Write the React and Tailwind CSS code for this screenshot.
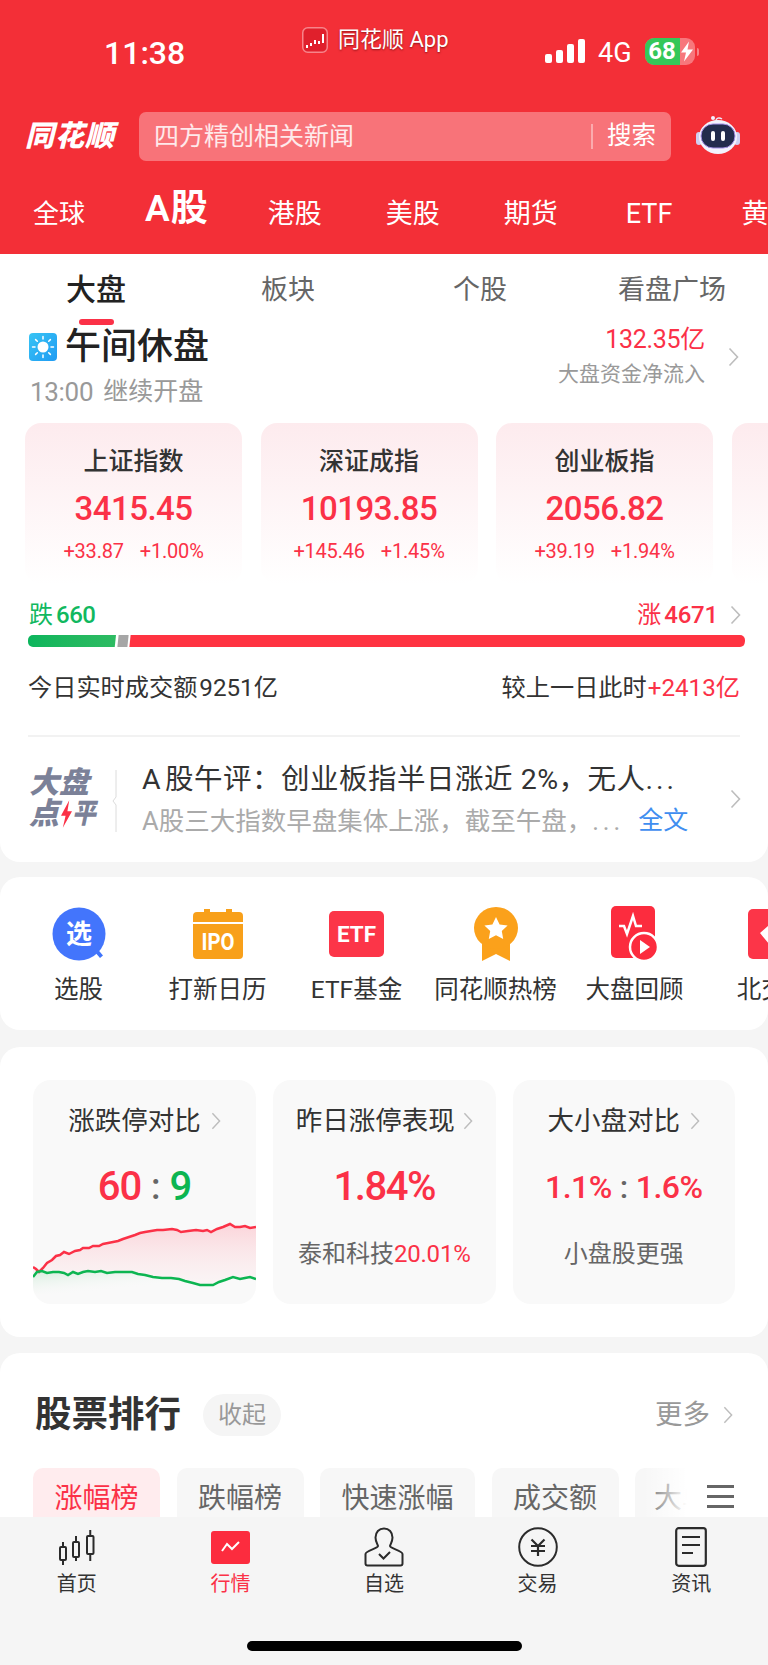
import React from 'react';

const RED = 'text-[#fb3147]';

const marketTabs = [
  { label: '全球', cls: 'ml-[33px] text-[26px]' },
  { label: 'A股', cls: 'ml-[60px] text-[37px] font-semibold tracking-[1px] -mt-[5px]' },
  { label: '港股', cls: 'ml-[59px] text-[27px]' },
  { label: '美股', cls: 'ml-[64px] text-[27px]' },
  { label: '期货', cls: 'ml-[64px] text-[27px]' },
  { label: 'ETF', cls: 'ml-[68px] text-[27px]' },
  { label: '黄金', cls: 'ml-[69px] text-[27px]' },
];

const indexCards = [
  { name: '上证指数', value: '3415.45', change: '+33.87', pct: '+1.00%' },
  { name: '深证成指', value: '10193.85', change: '+145.46', pct: '+1.45%' },
  { name: '创业板指', value: '2056.82', change: '+39.19', pct: '+1.94%' },
];

const upLine = [
  [0, 45], [3, 47], [6, 50], [10, 46], [14, 41], [19, 38], [23, 34], [27, 33], [31, 30], [36, 32], [42, 29], [47, 28],
  [50, 26], [56, 26], [60, 24], [66, 24], [70, 22], [75, 21], [80, 20], [85, 19], [90, 17], [96, 15], [102, 13], [107, 11],
  [112, 10], [118, 9], [124, 8], [130, 8], [139, 7], [144, 8], [148, 10], [155, 9], [163, 8], [170, 9], [174, 8], [178, 10],
  [184, 7], [190, 5], [197, 2], [202, 5], [207, 5], [212, 4], [217, 6], [223, 5],
];

const downLine = [
  [0, 55], [4, 50], [9, 49], [14, 51], [20, 50], [26, 50], [31, 51], [35, 53], [40, 50], [45, 52], [50, 50], [55, 49],
  [62, 50], [68, 49], [74, 51], [82, 50], [90, 50], [99, 50], [105, 52], [112, 53], [120, 55], [129, 56], [138, 56], [146, 57],
  [152, 59], [160, 61], [167, 63], [173, 63], [180, 63], [186, 60], [192, 58], [200, 55], [207, 57], [212, 56], [217, 55], [223, 57],
];

const toPath = (pts) => pts.map(([x, y], i) => `${i ? 'L' : 'M'}${x} ${y}`).join(' ');

function Chevron({ className = '' }) {
  return (
    <svg viewBox="0 0 11 20" className={className} fill="none" stroke="#bdbdbd" strokeWidth="1.6">
      <path d="M1.5 1.5 9.5 10 1.5 18.5" />
    </svg>
  );
}

function AppBadge() {
  return (
    <svg viewBox="0 0 26 26" className="w-[26px] h-[26px] shrink-0">
      <rect x="0.75" y="0.75" width="24.5" height="24.5" rx="5" fill="#e0202c" stroke="#f7848a" strokeWidth="1.5" />
      <path d="M4 18h2v3H4zM8 16h2v3H8zM12 13h2v4h-2zM16 14h2v3h-2zM20 7h2v9h-2z" fill="#fff" />
    </svg>
  );
}

function Robot() {
  return (
    <svg viewBox="0 0 44 40" className="w-[44px] h-[40px]">
      <path d="M20 6c0-3 3-4 6-2" fill="none" stroke="#ece8fb" strokeWidth="1.5" />
      <circle cx="17" cy="3" r="2" fill="#f4f1ff" />
      <rect x="0" y="17" width="6" height="13" rx="3" fill="#cfd0f2" />
      <rect x="38" y="17" width="6" height="13" rx="3" fill="#cfd0f2" />
      <ellipse cx="22" cy="22" rx="19" ry="17" fill="#f3f3fd" />
      <rect x="5" y="9" width="34" height="24" rx="12" fill="#232c4d" stroke="#a48fe6" strokeWidth="1" />
      <rect x="15" y="16" width="4" height="10" rx="2" fill="#fff" />
      <rect x="25" y="16" width="4" height="10" rx="2" fill="#fff" />
    </svg>
  );
}

function SunBadge() {
  return (
    <svg viewBox="0 0 28 28" className="w-[28px] h-[28px] shrink-0">
      <defs>
        <linearGradient id="sunBg" x1="0" y1="0" x2="1" y2="1">
          <stop offset="0" stopColor="#38c4f4" />
          <stop offset="1" stopColor="#1f9bf3" />
        </linearGradient>
      </defs>
      <rect width="28" height="28" rx="4" fill="url(#sunBg)" />
      <circle cx="14" cy="14" r="5.5" fill="#fff" />
      <g stroke="#fff" strokeWidth="1.5" strokeLinecap="round">
        <path d="M14 3.5v2.5M14 22v2.5M3.5 14H6M22 14h2.5M6.6 6.6l1.7 1.7M19.7 19.7l1.7 1.7M6.6 21.4l1.7-1.7M19.7 8.3l1.7-1.7" />
      </g>
    </svg>
  );
}

function PickIcon() {
  return (
    <svg viewBox="0 0 54 54" className="w-[54px] h-[54px]">
      <path d="M42 44l6 7 3-2.5-6-7z" fill="#3f74fb" />
      <circle cx="27" cy="27" r="26.500" fill="#4375fc" />
      <text x="27" y="36" textAnchor="middle" fontSize="26" fontWeight="700" fill="#fff" fontFamily="Noto Sans CJK SC">选</text>
    </svg>
  );
}

function IpoIcon() {
  return (
    <svg viewBox="0 0 50 50" className="w-[50px] h-[50px]">
      <path d="M11 0h6v3h16V0h6v3h7a4 4 0 0 1 4 4v6H0V7a4 4 0 0 1 4-4h7z" fill="#f8a01a" />
      <path d="M0 15h50v31a4 4 0 0 1-4 4H4a4 4 0 0 1-4-4z" fill="#f8a01a" />
      <text x="25" y="41" textAnchor="middle" fontSize="23" fontWeight="700" fill="#fff" fontFamily="Roboto" textLength="33" lengthAdjust="spacingAndGlyphs">IPO</text>
    </svg>
  );
}

function EtfIcon() {
  return (
    <svg viewBox="0 0 55 46" className="w-[55px] h-[46px]">
      <rect width="55" height="46" rx="5" fill="#fc3548" />
      <text x="27.500" y="31" textAnchor="middle" fontSize="22" fontWeight="700" fill="#fff" fontFamily="Roboto" textLength="39" lengthAdjust="spacingAndGlyphs">ETF</text>
    </svg>
  );
}

function MedalIcon() {
  return (
    <svg viewBox="0 0 44 54" className="w-[44px] h-[54px]">
      <path d="M8 32v22l14-7 14 7V32z" fill="#fba11b" />
      <ellipse cx="22" cy="21" rx="22" ry="21" fill="#fba11b" />
      <path d="M22 10l3.600 7.400 8 1.100-5.800 5.600 1.400 8L22 28.300l-7.200 3.800 1.400-8-5.800-5.600 8-1.100z" fill="#fff" />
    </svg>
  );
}

function ReviewIcon() {
  return (
    <svg viewBox="0 0 48 56" className="w-[48px] h-[56px]">
      <rect width="44" height="52" rx="5" fill="#fc2c3e" />
      <path d="M8 20h5l3 8 6-18 3 10h6" fill="none" stroke="#fff" strokeWidth="2.500" />
      <circle cx="33" cy="41" r="14" fill="#fc2c3e" stroke="#fff" strokeWidth="2.500" />
      <path d="M29 34l10 7-10 7z" fill="#fff" />
    </svg>
  );
}

function BeijingIcon() {
  return (
    <svg viewBox="0 0 52 50" className="w-[52px] h-[50px]">
      <rect width="52" height="50" rx="5" fill="#fc3548" />
      <path d="M12 24l9-8h20v6H24l-2 4 3 3h16v6H21z" fill="#fff" />
    </svg>
  );
}

const shortcuts = [
  { label: '选股', icon: <PickIcon /> },
  { label: '打新日历', icon: <IpoIcon /> },
  { label: 'ETF基金', icon: <EtfIcon /> },
  { label: '同花顺热榜', icon: <MedalIcon /> },
  { label: '大盘回顾', icon: <ReviewIcon /> },
  { label: '北交所', icon: <BeijingIcon /> },
];

function TrendChart() {
  const upArea = `${toPath(upLine)} ${[...downLine].reverse().map(([x, y]) => `L${x} ${y}`).join(' ')} Z`;
  const downArea = `${toPath(downLine)} L223 72 L0 72 Z`;
  return (
    <svg viewBox="0 0 223 82" className="w-full h-[82px] block">
      <defs>
        <linearGradient id="upFill" x1="0" y1="0" x2="0" y2="1">
          <stop offset="0" stopColor="#fbd5da" />
          <stop offset="1" stopColor="#fbeef0" stopOpacity="0.4" />
        </linearGradient>
        <linearGradient id="downFill" x1="0" y1="0" x2="1" y2="1">
          <stop offset="0" stopColor="#d4eddc" />
          <stop offset="0.6" stopColor="#f9f9f9" stopOpacity="0" />
        </linearGradient>
      </defs>
      <path d={upArea} fill="url(#upFill)" />
      <path d={downArea} fill="url(#downFill)" />
      <path d={toPath(upLine)} fill="none" stroke="#fb3147" strokeWidth="2.500" />
      <path d={toPath(downLine)} fill="none" stroke="#0cb551" strokeWidth="2.500" />
    </svg>
  );
}

function NavItem({ label, active, children }) {
  return (
    <div className="flex flex-col items-center pt-[10px]">
      <div className="h-[40px] flex items-center justify-center">{children}</div>
      <span className={`mt-[3px] text-[20px] leading-[28px] ${active ? RED : 'text-[#333]'}`}>{label}</span>
    </div>
  );
}

export default function App() {
  return (
    <div className="w-[768px] h-[1665px] flex flex-col overflow-hidden bg-[#f5f5f5] font-['Roboto','Noto_Sans_CJK_SC',sans-serif]">
      <header className="h-[254px] shrink-0 bg-[#f32f37] text-white">
        {/* status bar */}
        <div className="h-[112px] flex items-start">
          <span className="ml-[104px] mt-[33px] w-[198px] text-[32px] leading-[40px] font-medium">11:38</span>
          <div className="mt-[27px] w-[243px] flex items-center gap-[10px]">
            <AppBadge />
            <span className="text-[22px] leading-[26px] [text-shadow:0_1px_2px_rgba(80,0,0,0.6)]">同花顺 App</span>
          </div>
          <div className="mt-[39px] flex items-end gap-[4px] h-[24px]">
            <i className="w-[7px] h-[9px] rounded-[2px] bg-white" />
            <i className="w-[7px] h-[13px] rounded-[2px] bg-white" />
            <i className="w-[7px] h-[19px] rounded-[2px] bg-white" />
            <i className="w-[7px] h-[24px] rounded-[2px] bg-white" />
          </div>
          <span className="ml-[13px] mt-[37px] text-[27px] leading-[32px]">4G</span>
          <div className="ml-[13px] mt-[38px] flex items-center">
            <div className="relative w-[50px] h-[27px] rounded-[9px] overflow-hidden bg-white/35 flex">
              <div className="w-[35px] h-full bg-[#35c759] text-[24px] leading-[27px] font-bold text-center">68</div>
              <svg viewBox="0 0 12 20" className="w-[12px] h-[21px] ml-[1px] mt-[3px]">
                <path d="M8 0 0 11h5l-2 9 9-12H6.500z" fill="#fff" />
              </svg>
            </div>
            <i className="ml-[2px] w-[2px] h-[8px] rounded-r-full bg-white/40" />
          </div>
        </div>

        {/* logo and search */}
        <div className="h-[49px] flex items-center">
          <span className="ml-[25px] w-[114px] text-[29px] font-black italic tracking-[1px] leading-none">同花顺</span>
          <div className="w-[532px] h-[49px] rounded-[7px] bg-[#f87379] flex items-center">
            <span className="ml-[15px] flex-1 text-[25px] text-white/85 leading-none">四方精创相关新闻</span>
            <i className="w-[2px] h-[25px] bg-white/40" />
            <span className="ml-[14px] mr-[15px] text-[24.500px] leading-none">搜索</span>
          </div>
          <div className="ml-[25px] mt-[-4px]"><Robot /></div>
        </div>

        {/* market tabs */}
        <div className="h-[93px] pt-[35px] flex items-start whitespace-nowrap overflow-hidden">
          {marketTabs.map((tab) => (
            <span key={tab.label} className={`shrink-0 leading-[36px] ${tab.cls}`}>{tab.label}</span>
          ))}
        </div>
      </header>

      <main className="flex-1 overflow-hidden">
        <section className="bg-white rounded-b-[20px] h-[608px]">
          {/* sub tabs */}
          <div className="h-[79px] pt-[18px] grid grid-cols-4 text-center text-[27px] leading-[36px] text-[#666]">
            <div className="flex flex-col items-center">
              <span className="text-[30px] font-medium text-[#222]">大盘</span>
              <i className="mt-[11px] w-[35px] h-[6px] rounded-full bg-[#fb3147]" />
            </div>
            <span>板块</span>
            <span>个股</span>
            <span>看盘广场</span>
          </div>

          {/* market state and fund flow */}
          <div className="flex justify-between pl-[29px] pr-[29px]">
            <div>
              <div className="h-[28px] flex items-center gap-[8px]">
                <SunBadge />
                <span className="text-[36px] leading-[28px] font-medium text-[#222]">午间休盘</span>
              </div>
              <div className="mt-[16px] h-[30px] flex items-center gap-[10px] text-[#999] leading-[30px]">
                <span className="ml-[1px] text-[26px] tracking-[-0.3px]">13:00</span>
                <span className="text-[25px]">继续开盘</span>
              </div>
            </div>
            <div className="flex items-center -mt-[7px] h-[61px]">
              <div className="text-right">
                <div className={`text-[25px] leading-[28px] tracking-[-0.3px] ${RED}`}>132.35亿</div>
                <div className="mt-[7px] text-[21px] leading-[26px] text-[#999]">大盘资金净流入</div>
              </div>
              <Chevron className="ml-[23px] w-[11px] h-[20px]" />
            </div>
          </div>

          {/* index cards */}
          <div className="mt-[16px] pl-[25px] flex gap-[18.500px] overflow-hidden">
            {indexCards.map((card) => (
              <div key={card.name} className="w-[217px] h-[161px] shrink-0 rounded-[16px] bg-gradient-to-b from-[#fdebee] to-white flex flex-col items-center pt-[24px]">
                <div className="text-[25px] leading-[30px] font-medium text-[#333]">{card.name}</div>
                <div className={`mt-[12px] text-[33px] leading-[40px] font-medium tracking-[-0.5px] ${RED}`}>{card.value}</div>
                <div className={`mt-[10px] flex gap-[16px] text-[20px] leading-[24px] tracking-[-0.2px] ${RED}`}>
                  <span>{card.change}</span>
                  <span>{card.pct}</span>
                </div>
              </div>
            ))}
            <div className="w-[217px] h-[161px] shrink-0 rounded-[16px] bg-gradient-to-b from-[#fdebee] to-white" />
          </div>

          {/* rise and fall */}
          <div className="mt-[17px] mx-[29px] h-[28px] flex items-center justify-between">
            <span className="text-[#11b85f] text-[24px] leading-[28px]">跌<span className="ml-[3px] font-medium tracking-[-0.5px]">660</span></span>
            <div className="flex items-center">
              <span className={`text-[24px] leading-[28px] ${RED}`}>涨<span className="ml-[3px] font-medium tracking-[-0.2px]">4671</span></span>
              <Chevron className="ml-[12px] w-[11px] h-[20px] -mr-[2px]" />
            </div>
          </div>
          <div className="mt-[6px] ml-[28px] mr-[23px] h-[12px] flex rounded-[5px] overflow-hidden">
            <div className="w-[88px] bg-gradient-to-r from-[#0ab55c] to-[#2dbb62] -skew-x-6 origin-top-right" />
            <div className="ml-[2px] w-[10px] bg-[#a6a6a6] -skew-x-6" />
            <div className="ml-[2px] flex-1 bg-[#ff3341] -skew-x-6" />
          </div>

          {/* turnover */}
          <div className="mt-[26px] mx-[28px] h-[30px] flex items-center justify-between text-[24.200px] leading-[30px] text-[#333]">
            <span>今日实时成交额<span className="ml-[2px]">9251亿</span></span>
            <span>较上一日此时<span className={`ml-[1px] ${RED}`}>+2413亿</span></span>
          </div>
          <div className="mt-[32px] mx-[28px] h-[2px] bg-[#f2f2f2]" />

          {/* commentary */}
          <div className="mt-[26px] ml-[29px] flex items-start">
            <div className="mt-[4px] w-[68px] text-[30px] leading-[31px] font-black italic text-[#7b8198]">
              <div className="whitespace-nowrap">大盘</div>
              <div className="flex items-center h-[31px]">
                <span>点</span>
                <svg viewBox="0 0 12 30" className="w-[11px] h-[30px] ml-[2px] shrink-0"><path d="M9 0 0 17h5L2 30 12 12H7z" fill="#fb3147" /></svg>
                <span className="text-[28px] scale-x-85 origin-left">平</span>
              </div>
            </div>
            <svg viewBox="0 0 8 62" className="ml-[14px] mt-[7px] w-[8px] h-[62px]" fill="none" stroke="#dcdcdc" strokeWidth="1">
              <path d="M5 0v27l-3 4 3 4v27" />
            </svg>
            <div className="ml-[23px] w-[546px]">
              <div className="h-[34px] text-[28.500px] leading-[34px] tracking-[0.5px] text-[#333] whitespace-nowrap">
                <span className="mr-[4px]">A</span>股午评：创业板指半日涨近 2%，无人<span className="tracking-[3px]">...</span>
              </div>
              <div className="mt-[8px] h-[32px] flex items-center text-[25.500px] leading-[32px] text-[#aaa] whitespace-nowrap">
                <span>A股三大指数早盘集体上涨，截至午盘，</span>
                <span className="tracking-[4px]">...</span>
                <span className="ml-[14px] text-[#3f8ef0] text-[25px]">全文</span>
              </div>
            </div>
            <Chevron className="ml-[42px] mt-[26px] w-[11px] h-[20px]" />
          </div>
        </section>

        {/* shortcuts */}
        <section className="mt-[15px] h-[153px] bg-white rounded-[20px] overflow-hidden pl-[9px] pt-[28px] flex">
          {shortcuts.map((item) => (
            <div key={item.label} className="w-[139px] shrink-0 flex flex-col items-center">
              <div className="h-[58px] flex items-center justify-center">{item.icon}</div>
              <span className="mt-[12px] text-[24.500px] leading-[30px] text-[#333] whitespace-nowrap">{item.label}</span>
            </div>
          ))}
        </section>

        {/* limit-up summary */}
        <section className="mt-[17px] h-[290px] bg-white rounded-[20px] px-[33px] pt-[33px] flex gap-[17px]">
          <div className="w-[223px] h-[224px] shrink-0 rounded-[18px] bg-[#f9f9f9] overflow-hidden pt-[26px]">
            <div className="flex items-center justify-center gap-[10px] text-[26.500px] leading-[30px] text-[#333]">
              <span>涨跌停对比</span><Chevron className="w-[10px] h-[18px]" />
            </div>
            <div className="mt-[26px] h-[50px] flex items-center justify-center text-[40px] leading-[50px] font-medium tracking-[-1px]">
              <span className={RED}>60</span>
              <span className="mx-[10px] text-[#666] text-[36px]">:</span>
              <span className="text-[#0cb551]">9</span>
            </div>
            <div className="mt-[10px]"><TrendChart /></div>
          </div>
          <div className="flex-1 h-[224px] rounded-[18px] bg-[#f9f9f9] pt-[26px] flex flex-col items-center">
            <div className="flex items-center gap-[8px] text-[26.500px] leading-[30px] text-[#333]">
              <span>昨日涨停表现</span><Chevron className="w-[10px] h-[18px]" />
            </div>
            <div className={`mt-[26px] h-[50px] text-[40px] leading-[50px] font-medium tracking-[-1.500px] ${RED}`}>1.84%</div>
            <div className="mt-[27px] text-[24px] leading-[30px] text-[#666] whitespace-nowrap">
              泰和科技<span className={`tracking-[-0.2px] ${RED}`}>20.01%</span>
            </div>
          </div>
          <div className="flex-1 h-[224px] rounded-[18px] bg-[#f9f9f9] pt-[26px] flex flex-col items-center">
            <div className="flex items-center gap-[10px] text-[26.500px] leading-[30px] text-[#333]">
              <span>大小盘对比</span><Chevron className="w-[10px] h-[18px]" />
            </div>
            <div className={`mt-[26px] h-[50px] text-[32px] leading-[50px] font-medium tracking-[-0.5px] ${RED}`}>
              1.1%<span className="mx-[8px] text-[#666]">:</span>1.6%
            </div>
            <div className="mt-[27px] text-[24px] leading-[30px] text-[#666]">小盘股更强</div>
          </div>
        </section>

        {/* stock ranking */}
        <section className="relative mt-[16px] h-[300px] bg-white rounded-t-[20px] pt-[41px]">
          <div className="mx-[35px] h-[42px] flex items-center">
            <span className="text-[36.500px] leading-[42px] font-bold text-[#333]">股票排行</span>
            <span className="ml-[22px] w-[78px] h-[42px] rounded-full bg-[#f5f5f5] text-center text-[24px] leading-[42px] text-[#999]">收起</span>
            <span className="ml-auto text-[27.500px] leading-[42px] text-[#999]">更多</span>
            <Chevron className="ml-[13px] w-[10px] h-[22px]" />
          </div>
          <div className="mt-[32px] ml-[33px] flex gap-[16.500px] overflow-hidden text-[28px] leading-[62px] text-[#666] text-center">
            <span className={`w-[127px] shrink-0 rounded-[10px] bg-[#ffecee] ${RED}`}>涨幅榜</span>
            <span className="w-[127px] shrink-0 rounded-[10px] bg-[#f7f7f7]">跌幅榜</span>
            <span className="w-[155px] shrink-0 rounded-[10px] bg-[#f7f7f7]">快速涨幅</span>
            <span className="w-[127px] shrink-0 rounded-[10px] bg-[#f7f7f7]">成交额</span>
            <span className="w-[127px] shrink-0 rounded-[10px] bg-[#f7f7f7] text-left pl-[19px]">大单</span>
          </div>
          <div className="absolute right-0 top-[115px] w-[125px] h-[62px] bg-gradient-to-r from-white/0 via-white via-35% to-white flex items-center justify-end pr-[34px] pb-[6px]">
            <div className="w-[27px] flex flex-col gap-[7px]">
              <i className="h-[3px] bg-[#666]" />
              <i className="h-[3px] bg-[#666]" />
              <i className="h-[3px] bg-[#666]" />
            </div>
          </div>
        </section>
      </main>

      {/* bottom tab bar */}
      <nav className="h-[148px] shrink-0 bg-[#f5f5f5] relative">
        <div className="grid grid-cols-5">
          <NavItem label="首页">
            <svg viewBox="0 0 36 35" className="w-[36px] h-[35px]" fill="none" stroke="#2b2b2b" strokeWidth="2">
              <rect x="1" y="17" width="6" height="13" rx="1" />
              <path d="M4 12v5M4 30v5" />
              <rect x="14" y="12" width="6" height="15" rx="1" />
              <path d="M17 6v6M17 27v4" />
              <rect x="28" y="6" width="6.500" height="18" rx="1" />
              <path d="M31.250 0v6M31.250 24v7" />
            </svg>
          </NavItem>
          <NavItem label="行情" active>
            <svg viewBox="0 0 39 33" className="w-[39px] h-[33px]">
              <rect width="39" height="33" rx="3" fill="#fc2c3e" />
              <path d="M11 20l5-7 5 5 7-7" fill="none" stroke="#fff" strokeWidth="2" />
            </svg>
          </NavItem>
          <NavItem label="自选">
            <svg viewBox="0 0 40 40" className="w-[40px] h-[40px]" fill="none" stroke="#2b2b2b" strokeWidth="2">
              <path d="M20 1.500c5 0 8.500 3.500 8.500 9 0 4-2 6.500-2.500 8.500 0 2.500 12.500 4.500 12.500 8v9.500a2 2 0 0 1-2 2H3.500a2 2 0 0 1-2-2V27c0-3.500 12.500-5.500 12.500-8-.5-2-2.500-4.500-2.500-8.500 0-5.500 3.500-9 8.500-9z" />
              <path d="M15 27l4.500 4.500L26 25" />
            </svg>
          </NavItem>
          <NavItem label="交易">
            <svg viewBox="0 0 40 40" className="w-[40px] h-[40px]" fill="none" stroke="#2b2b2b" strokeWidth="2">
              <circle cx="20" cy="20" r="18.800" />
              <path d="M13.500 12.500l6.500 6.500 6.500-6.500M13 19h14M13 24h14M20 19v10" strokeWidth="2.200" />
            </svg>
          </NavItem>
          <NavItem label="资讯">
            <svg viewBox="0 0 32 40" className="w-[32px] h-[40px]" fill="none" stroke="#2b2b2b" strokeWidth="2.200">
              <rect x="1.200" y="1.200" width="29.600" height="37.600" rx="2.500" />
              <path d="M7 10h18M7 18h18M7 26h11" />
            </svg>
          </NavItem>
        </div>
        <i className="absolute left-[247px] bottom-[14px] w-[275px] h-[10px] rounded-full bg-black" />
      </nav>
    </div>
  );
}
